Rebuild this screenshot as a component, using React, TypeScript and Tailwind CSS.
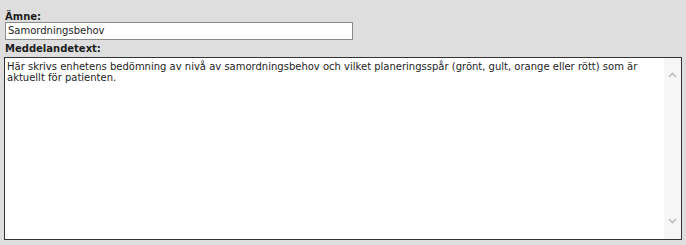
import React from "react";

function Chevron({ up }: { up?: boolean }) {
  return (
    <svg width="9" height="6" viewBox="0 0 9 6" className="block">
      <path
        d={up ? "M1 5 L4.5 1.5 L8 5" : "M1 1 L4.5 4.5 L8 1"}
        fill="none"
        stroke="#bdbdbd"
        strokeWidth="1.6"
      />
    </svg>
  );
}

export default function App() {
  return (
    <div className="w-[686px] h-[245px] bg-[#dedede] pl-[5px] pt-[11px] font-['DejaVu_Sans',Verdana,sans-serif] text-[#1e1e1e]">
      <div className="text-[10px] font-bold leading-[11px]">Ämne:</div>
      <div className="w-[348px] h-[18px] border border-[#8a8a8a] bg-white px-[2px] text-[10px] leading-[16px]">
        Samordningsbehov
      </div>
      <div className="mt-[3px] text-[10px] font-bold leading-[12px]">Meddelandetext:</div>
      <div className="ml-[-1px] mt-[2px] flex w-[678px] h-[183px] border border-[#333333] bg-white">
        <div className="flex-1 px-[2px] pt-[3px] text-[10px] leading-[11px]">
          Här skrivs enhetens bedömning av nivå av samordningsbehov och vilket planeringsspår (grönt, gult, orange eller rött) som är aktuellt för patienten.
        </div>
        <div className="w-[17px] bg-[#f6f6f6] flex flex-col items-center justify-between pt-[14px] pb-[15px]">
          <Chevron up />
          <Chevron />
        </div>
      </div>
    </div>
  );
}
